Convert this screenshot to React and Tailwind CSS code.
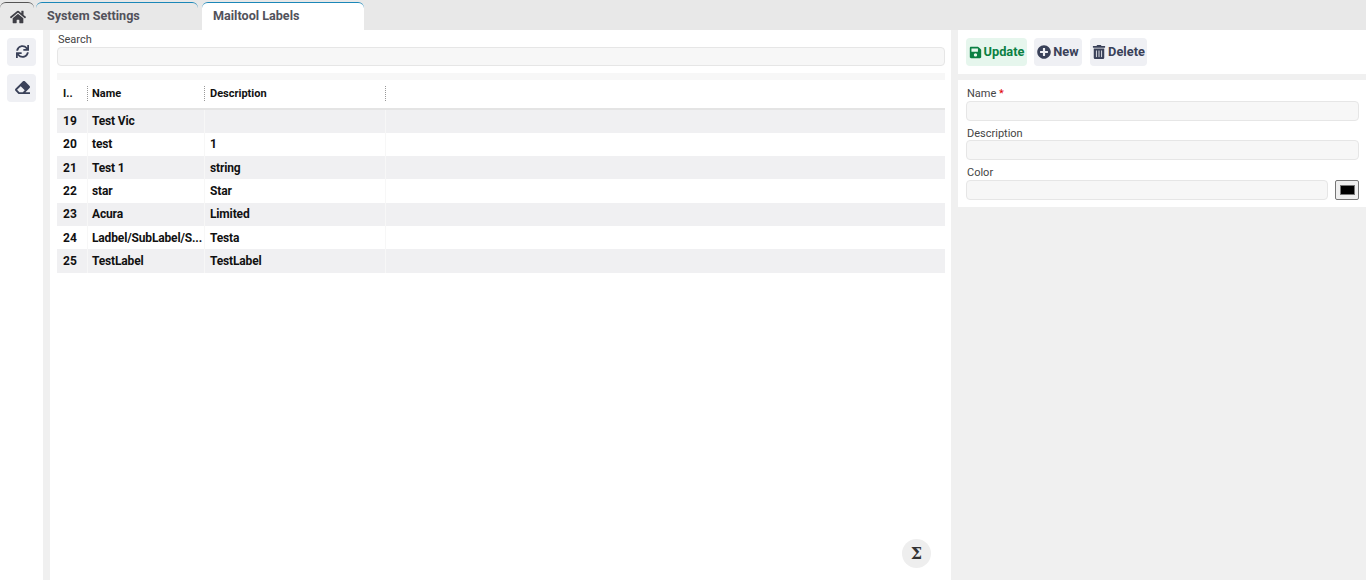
import { FaHome, FaSync, FaEraser, FaSave, FaPlusCircle, FaTrashAlt } from 'react-icons/fa'

const rows = [
  ['19', 'Test Vic', ''],
  ['20', 'test', '1'],
  ['21', 'Test 1', 'string'],
  ['22', 'star', 'Star'],
  ['23', 'Acura', 'Limited'],
  ['24', 'Ladbel/SubLabel/S...', 'Testa'],
  ['25', 'TestLabel', 'TestLabel'],
]

function Field({ label, required, children, className }) {
  return (
    <div className={className}>
      <div className="h-[13px] pl-[1px] text-[11px] leading-[13px] text-[#444]">
        {label}
        {required && <span className="text-[#e00000]"> *</span>}
      </div>
      {children}
    </div>
  )
}

function Input({ className = '' }) {
  return <div className={`rounded-[4px] border border-[#e6e6e6] bg-[#f7f7f7] ${className}`} />
}

function ActionButton({ icon, label, className }) {
  return (
    <button type="button" className={`flex h-[28px] items-center justify-center gap-[2px] rounded-[4px] text-[12.8px] font-bold ${className}`}>
      {icon}
      {label}
    </button>
  )
}

export default function App() {
  return (
    <div className="flex h-[580px] w-[1366px] flex-col overflow-hidden bg-[#f0f0f0] font-['Roboto',sans-serif]">
      <div className="flex h-[30px] items-end bg-[#e8e8e8]">
        <div className="flex h-[28px] w-[34px] justify-center rounded-t-[6px] border-t border-[#555] pl-[2px] pt-[6px] text-[#3f3f46]">
          <FaHome size={16} />
        </div>
        <div className="ml-[2px] h-[28px] w-[162px] rounded-t-[6px] border-t border-[#1b87b8] pl-[11px] pt-[5px] text-[12.6px] font-bold leading-[16px] text-[#52525b]">
          System Settings
        </div>
        <div className="ml-[4px] h-[28px] w-[162px] rounded-t-[6px] border-t border-[#1b87b8] bg-white pl-[11px] pt-[5px] text-[12.6px] font-bold leading-[16px] text-[#52525b]">
          Mailtool Labels
        </div>
      </div>

      <div className="flex min-h-0 flex-1">
        <div className="flex w-[43px] flex-col items-center gap-[8px] bg-white pt-[8px]">
          <button type="button" className="flex h-[28px] w-[29px] items-center justify-center rounded-[4px] bg-[#eff0f4] pb-[2px] pl-[1px] text-[#3a4159]">
            <FaSync size={13} />
          </button>
          <button type="button" className="flex h-[28px] w-[29px] items-center justify-center rounded-[4px] bg-[#eff0f4] pb-[1px] pl-[1px] text-[#3a4159]">
            <FaEraser size={15} />
          </button>
        </div>

        <div className="relative ml-[7px] flex w-[901px] flex-col bg-white pl-[7px] pr-[6px] pt-[3px]">
          <div className="h-[14px] pl-[1px] text-[11px] leading-[13px] text-[#444]">Search</div>
          <Input className="h-[19px]" />
          <div className="mt-[7px] h-[7px] bg-[#f7f7f7]" />
          <div className="flex h-[29.5px] items-center border-b-2 border-[#e4e4e4] text-[11px] font-bold text-[#111]">
            <div className="flex h-[15px] w-[31px] items-center border-r border-dotted border-[#999] pl-[6px]">I..</div>
            <div className="flex h-[15px] w-[117px] items-center border-r border-dotted border-[#999] pl-[4px]">Name</div>
            <div className="flex h-[15px] w-[181px] items-center border-r border-dotted border-[#999] pl-[5px]">Description</div>
          </div>
          <div className="text-[12px] font-bold tracking-[-0.15px] text-[#111]">
            {rows.map((r, i) => (
              <div key={r[0]} className={`flex h-[23.3px] items-center ${i % 2 === 0 ? 'bg-[#f0f0f2]' : 'bg-white'}`}>
                <div className="flex h-full w-[31px] items-center border-r border-[#f7f7f7] pl-[6px] tracking-normal">{r[0]}</div>
                <div className="flex h-full w-[117px] items-center border-r border-[#f7f7f7] pl-[4px]">{r[1]}</div>
                <div className="flex h-full w-[181px] items-center border-r border-[#f7f7f7] pl-[5px]">{r[2]}</div>
              </div>
            ))}
          </div>
          <button type="button" className="absolute left-[852px] top-[509px] flex h-[29px] w-[29px] items-center justify-center rounded-full bg-[#eeeeee] font-['DejaVu_Serif',serif] text-[16px] font-bold text-[#333]">
            Σ
          </button>
        </div>

        <div className="ml-[7px] flex flex-1 flex-col">
          <div className="flex h-[44px] items-center gap-[7px] bg-white pl-[8px]">
            <ActionButton className="w-[61px] bg-[#e6f6ed] text-[#0a8043]" icon={<FaSave size={13} />} label="Update" />
            <ActionButton className="w-[48px] bg-[#eff0f4] text-[#3a4159]" icon={<FaPlusCircle size={14} />} label="New" />
            <ActionButton className="ml-[1px] w-[57px] bg-[#eff0f4] text-[#3a4159]" icon={<FaTrashAlt size={14} />} label="Delete" />
          </div>
          <div className="mt-[6px] flex h-[127px] flex-col bg-white pl-[8px] pr-[7px] pt-[7px]">
            <Field label="Name" required>
              <Input className="mt-[1px] h-[19.5px]" />
            </Field>
            <Field label="Description" className="mt-[6.5px]">
              <Input className="h-[19.5px]" />
            </Field>
            <Field label="Color" className="mt-[6.5px]">
              <div className="mt-[1px] flex items-center gap-[7px]">
                <Input className="h-[19.5px] flex-1" />
                <div className="flex h-[20px] w-[24px] items-center justify-center rounded-[2px] border border-[#767676] bg-[#efefef]">
                  <div className="h-[10px] w-[15px] border border-[#777] bg-black" />
                </div>
              </div>
            </Field>
          </div>
        </div>
      </div>
    </div>
  )
}
